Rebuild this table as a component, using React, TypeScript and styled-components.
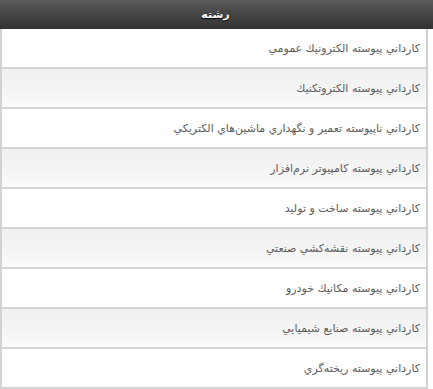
import styled, { createGlobalStyle } from "styled-components";

const GlobalStyle = createGlobalStyle`
  html, body {
    margin: 0;
    padding: 0;
    background: #ffffff;
  }
`;

const fields = [
  "كارداني پيوسته الكترونيك عمومي",
  "كارداني پيوسته الكتروتكنيك",
  "كارداني ناپيوسته تعمير و نگهداري ماشين‌هاي الكتريكي",
  "كارداني پيوسته كامپيوتر نرم‌افزار",
  "كارداني پيوسته ساخت و توليد",
  "كارداني پيوسته نقشه‌كشي صنعتي",
  "كارداني پيوسته مكانيك خودرو",
  "كارداني پيوسته صنايع شيميايي",
  "كارداني پيوسته ريخته‌گري",
];

const App = () => {
  return (
    <>
      <GlobalStyle />
      <Wrapper dir="rtl">
        <HeaderBar>رشته</HeaderBar>
        <List>
          {fields.map((name, i) => (
            <Row key={name} $alt={i % 2 === 1}>
              {name}
            </Row>
          ))}
        </List>
      </Wrapper>
    </>
  );
};

const Wrapper = styled.div`
  width: 433px;
  font-family: "DejaVu Sans", Tahoma, sans-serif;
`;

const HeaderBar = styled.div`
  height: 29px;
  display: flex;
  align-items: center;
  justify-content: center;
  padding-right: 2px;
  box-sizing: border-box;
  background: linear-gradient(to bottom, #5c5c5c 0%, #444444 50%, #333333 100%);
  color: #ffffff;
  font-size: 11px;
  font-weight: bold;
  text-shadow: 0 1px 1px #000;
`;

const List = styled.div`
  width: 428px;
  margin-right: 5px;
  box-sizing: border-box;
  border-left: 2px solid #d2d2d2;
  border-right: 2px solid #d2d2d2;
`;

const Row = styled.div<{ $alt: boolean }>`
  height: 40px;
  box-sizing: border-box;
  display: flex;
  align-items: center;
  padding: 0 6px;
  border-bottom: 2px solid #d4d4d4;
  background: ${({ $alt }) =>
    $alt ? "linear-gradient(to bottom, #efefef 0%, #fafafa 100%)" : "#ffffff"};
  color: #5a5a5a;
  font-size: 11px;
`;

export default App;
